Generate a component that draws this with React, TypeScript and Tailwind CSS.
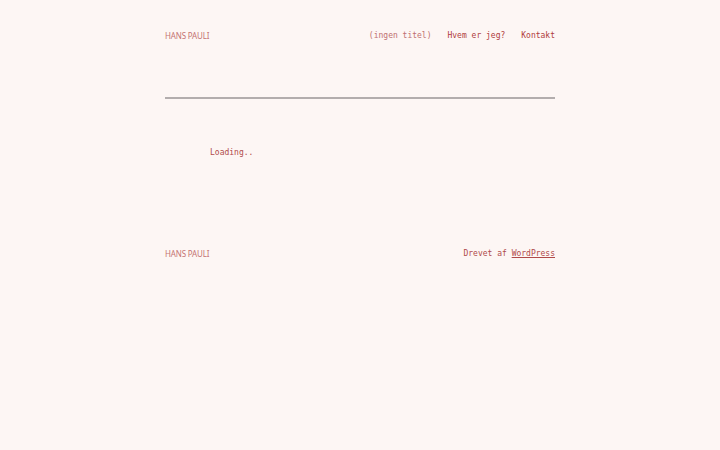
export default function App() {
  return (
    <div className="min-h-[450px] w-full bg-[#fdf6f4] text-[#b04a4a]">
      <div className="mx-auto w-[390px]">
        <header className="flex h-[70px] items-center justify-between pt-[2px]">
          <a className="font-['Noto_Sans',sans-serif] text-[8px] uppercase tracking-[-0.02em] text-[#c47272]">
            Hans Pauli
          </a>
          <nav className="flex gap-[16px] font-['DejaVu_Sans_Mono',monospace] text-[8px]">
            <a className="text-[#c07070]">(ingen titel)</a>
            <a className="text-[#b03c3c]">Hvem er jeg?</a>
            <a className="text-[#b03c3c]">Kontakt</a>
          </nav>
        </header>
        <div className="mt-[27px] h-[1.5px] bg-[#b3adad]" />
        <main className="flex h-[108px] items-center pl-[45px] font-['DejaVu_Sans_Mono',monospace] text-[8px] text-[#b04a4a]">
          Loading..
        </main>
        <footer className="mt-[41px] flex items-center justify-between">
          <a className="font-['Noto_Sans',sans-serif] text-[8px] uppercase tracking-[-0.02em] text-[#c47272]">
            Hans Pauli
          </a>
          <p className="font-['DejaVu_Sans_Mono',monospace] text-[8px] text-[#b04a4a]">
            Drevet af <a className="underline">WordPress</a>
          </p>
        </footer>
      </div>
    </div>
  );
}
